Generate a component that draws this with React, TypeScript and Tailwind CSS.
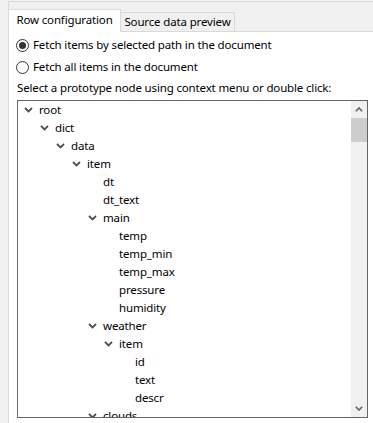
import React from "react";

type Node = [string, number, boolean];

const nodes: Node[] = [
  ["root", 0, true],
  ["dict", 1, true],
  ["data", 2, true],
  ["item", 3, true],
  ["dt", 4, false],
  ["dt_text", 4, false],
  ["main", 4, true],
  ["temp", 5, false],
  ["temp_min", 5, false],
  ["temp_max", 5, false],
  ["pressure", 5, false],
  ["humidity", 5, false],
  ["weather", 4, true],
  ["item", 5, true],
  ["id", 6, false],
  ["text", 6, false],
  ["descr", 6, false],
  ["clouds", 4, true],
];

function Chevron() {
  return (
    <svg width="9" height="6" viewBox="0 0 9 6" className="block">
      <polyline points="1,1 4.5,4.5 8,1" fill="none" stroke="#505050" strokeWidth="1.8" />
    </svg>
  );
}

function Radio({ checked, label }: { checked: boolean; label: string }) {
  return (
    <div className="flex h-[20px] items-center">
      <span className="ml-[7px] flex h-[13px] w-[13px] items-center justify-center rounded-full border border-[#333333] bg-white">
        {checked && <span className="h-[7px] w-[7px] rounded-full bg-[#333333]" />}
      </span>
      <span className="ml-[4px]">{label}</span>
    </div>
  );
}

export default function App() {
  return (
    <div
      className="h-[423px] w-[373px] overflow-hidden whitespace-nowrap bg-[#f0f0f0] text-[11.5px] tracking-[-0.15px] text-black"
      style={{ fontFamily: "'Noto Sans', 'Open Sans', sans-serif" }}
    >
      <div className="ml-[8px] mt-[1px] h-full border-l border-t border-[#dadada]">
        {/* Tabs */}
        <div className="flex h-[30px] items-end">
          <div className="flex h-[23px] w-[112px] items-center justify-center border-r border-t border-[#d9d9d9] bg-white pb-[2px]">
            Row configuration
          </div>
          <div className="flex h-[20px] w-[114px] items-center justify-center border-b border-r border-t border-[#d9d9d9] bg-[#f0f0f0] pb-[1px]">
            Source data preview
          </div>
          <div className="h-full flex-1 border-b border-[#d9d9d9]" />
        </div>

        {/* Panel */}
        <div className="h-full bg-white pl-[8px] pr-[5px] pt-[3px]">
          <div className="-ml-[8px]">
            <Radio checked label="Fetch items by selected path in the document" />
            <div className="mt-[2px]">
              <Radio checked={false} label="Fetch all items in the document" />
            </div>
          </div>
          <div className="mt-[2px] flex h-[18px] items-center">
            Select a prototype node using context menu or double click:
          </div>

          {/* Tree */}
          <div className="mt-[3px] flex h-[318px] border border-[#646464] bg-white">
            <div className="flex-1 overflow-hidden">
              {nodes.map(([name, level, open], i) => (
                <div
                  key={i}
                  className="flex h-[18px] items-center"
                  style={{ paddingLeft: 6 + level * 16 }}
                >
                  <span className="flex w-[9px] justify-center">{open && <Chevron />}</span>
                  <span className="ml-[6px]">{name}</span>
                </div>
              ))}
            </div>
            {/* Scrollbar */}
            <div className="flex w-[16px] flex-col bg-[#f0f0f0]">
              <div className="flex h-[17px] items-center justify-center">
                <svg width="8" height="5" viewBox="0 0 8 5">
                  <polyline points="0.8,4.2 4,1 7.2,4.2" fill="none" stroke="#606060" strokeWidth="1.6" />
                </svg>
              </div>
              <div className="h-[24px] bg-[#cdcdcd]" />
              <div className="flex-1" />
              <div className="flex h-[17px] items-center justify-center">
                <svg width="8" height="5" viewBox="0 0 8 5">
                  <polyline points="0.8,0.8 4,4 7.2,0.8" fill="none" stroke="#606060" strokeWidth="1.6" />
                </svg>
              </div>
            </div>
          </div>
        </div>
      </div>
    </div>
  );
}
